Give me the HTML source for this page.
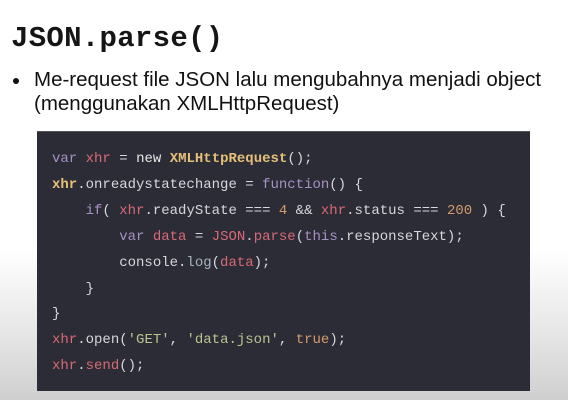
<!DOCTYPE html>
<html><head><style>
html,body{margin:0;padding:0}
body{width:568px;height:400px;overflow:hidden;position:relative;background:linear-gradient(to bottom,#fff 0,#fff 250px,#e4e4e4 340px,#cfcfcf 400px);font-family:"Liberation Sans",sans-serif}
h1{position:absolute;left:11px;top:22px;margin:0;font:bold 29px "Liberation Mono",monospace;color:#151515;letter-spacing:0.3px}
.b{position:absolute;left:13px;top:68px;font-size:20.5px;color:#111;line-height:24px}
.b .dot{position:absolute;left:0;top:10px;width:6px;height:6px;border-radius:50%;background:#111}
.b .t{margin-left:21px;white-space:nowrap}
.code{position:absolute;left:37px;top:131px;width:493px;height:259px;background:#2b2c35;border-top:1px solid #555}
pre{position:absolute;left:52px;top:147px;margin:0;font:14px/25.9px "Liberation Mono",monospace;color:#d6d8dc}
.k{color:#a891c6}.r{color:#d86a78}.y{color:#e6c07a;font-weight:bold}.o{color:#d69a6a}.s{color:#b9c58f}.g{color:#a7b4bf}.w{color:#e8e8e8}
</style></head><body>
<h1>JSON.parse()</h1>
<div class="b"><span class="dot"></span><div class="t">Me-request file JSON lalu mengubahnya menjadi object<br>(menggunakan XMLHttpRequest)</div></div>
<div class="code"></div>
<pre><span class="k">var</span> <span class="r">xhr</span> = <span class="w">new</span> <span class="y">XMLHttpRequest</span>();
<span class="y">xhr</span>.onreadystatechange = <span class="k">function</span>() {
    <span class="k">if</span>( <span class="r">xhr</span>.readyState === <span class="o">4</span> &amp;&amp; <span class="r">xhr</span>.status === <span class="o">200</span> ) {
        <span class="k">var</span> <span class="r">data</span> = <span class="r">JSON</span>.<span class="r">parse</span>(<span class="k">this</span>.responseText);
        console.<span class="g">log</span>(<span class="r">data</span>);
    }
}
<span class="r">xhr</span>.open(<span class="s">'GET'</span>, <span class="s">'data.json'</span>, <span class="o">true</span>);
<span class="r">xhr</span>.<span class="r">send</span>();</pre>
</body></html>
